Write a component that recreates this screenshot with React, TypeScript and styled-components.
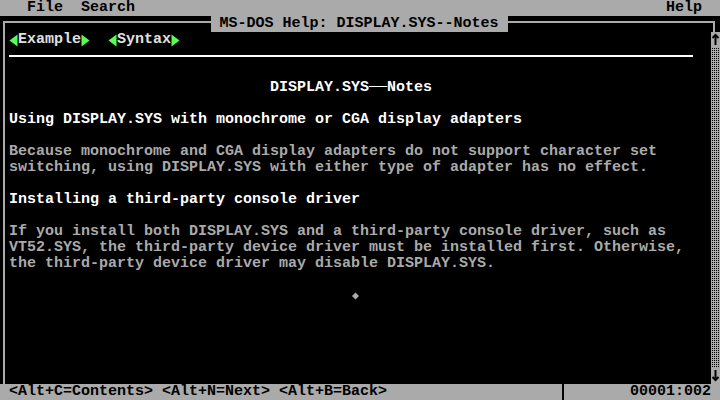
import React from 'react';
import styled, { createGlobalStyle } from 'styled-components';

const CELL = 9;
const ROW = 16;

const GRAY = '#aaaaaa';
const WHITE = '#ffffff';
const GREEN = '#55ff55';

const GlobalStyle = createGlobalStyle`
  html, body {
    margin: 0;
    padding: 0;
    background: #000;
  }
`;

const Screen = styled.div`
  width: 720px;
  height: 400px;
  background: #000;
  display: flex;
  flex-direction: column;
  overflow: hidden;
  font-family: "Liberation Mono", "DejaVu Sans Mono", monospace;
  font-size: 15px;
  font-weight: bold;
  line-height: ${ROW}px;
  white-space: pre;
`;

const MenuBar = styled.div`
  height: ${ROW}px;
  background: ${GRAY};
  color: #000;
  display: flex;
  padding: 0 ${CELL * 2}px 0 ${CELL * 3}px;
  gap: ${CELL * 2}px;
`;

const MenuItem = styled.span<{ $right?: boolean }>`
  margin-left: ${(p) => (p.$right ? 'auto' : '0')};
`;

const TitleRow = styled.div`
  height: ${ROW}px;
  display: flex;
`;

const FrameEdge = styled.div<{ $side: 'left' | 'right' }>`
  flex: 1;
  align-self: flex-end;
  height: 9px;
  border-top: 2px solid ${GRAY};
  ${(p) =>
    p.$side === 'left'
      ? `border-left: 2px solid ${GRAY}; margin-left: 3px;`
      : `border-right: 2px solid ${GRAY}; margin-right: 5px;`}
`;

const Title = styled.div`
  width: ${CELL * 33}px;
  text-align: center;
  background: ${GRAY};
  color: #000;
`;

const Body = styled.div`
  flex: 1;
  display: flex;
`;

const Content = styled.div`
  flex: 1;
  margin-left: 3px;
  border-left: 2px solid ${GRAY};
  padding-left: 4px;
  display: flex;
  flex-direction: column;
`;

const Line = styled.div<{ $tone?: 'bright' | 'normal'; $indent?: number }>`
  height: ${ROW}px;
  color: ${(p) => (p.$tone === 'bright' ? WHITE : GRAY)};
  padding-left: ${(p) => (p.$indent || 0) * CELL}px;
`;

const ButtonRow = styled.div`
  height: ${ROW}px;
  display: flex;
  gap: ${CELL * 2}px;
`;

const Button = styled.span`
  display: inline-flex;
  color: #e0e0e0;
`;

const Separator = styled.div`
  width: ${CELL * 76}px;
  box-sizing: border-box;
  border-bottom: 2px solid ${WHITE};
  height: 9px;
  margin-bottom: 7px;
`;

const Cell = styled.svg`
  display: block;
  width: ${CELL}px;
  height: ${ROW}px;
  flex: none;
`;

const ScrollBar = styled.div`
  width: ${CELL}px;
  display: flex;
  flex-direction: column;
`;

const ScrollArrow = styled.div`
  height: ${ROW}px;
  background: ${GRAY};
`;

const ScrollTrack = styled.div`
  flex: 1;
  background: repeating-conic-gradient(#000 0 25%, ${GRAY} 0 100%) 0 0 / 2px 2px;
`;

const StatusBar = styled.div`
  height: ${ROW}px;
  background: ${GRAY};
  color: #000;
  display: flex;
`;

const StatusKeys = styled.div`
  width: ${CELL * 61}px;
  padding-left: ${CELL}px;
`;

const StatusDivider = styled.div`
  width: ${CELL}px;
  display: flex;
  justify-content: center;
  &::before {
    content: '';
    width: 2px;
    background: #000;
  }
`;

const StatusPos = styled.div`
  flex: 1;
  text-align: right;
  padding-right: ${CELL}px;
`;

const Arrow = ({ dir, color }: { dir: 'left' | 'right' | 'up' | 'down'; color: string }) => {
  const shapes = {
    left: <polygon points="0.5,8.5 8.5,2.5 8.5,14.5" fill={color} />,
    right: <polygon points="8.5,8.5 0.5,2.5 0.5,14.5" fill={color} />,
    up: (
      <g stroke={color} strokeWidth="2" fill="none">
        <line x1="4.5" y1="3" x2="4.5" y2="13" />
        <polyline points="1.5,6 4.5,3 7.5,6" />
      </g>
    ),
    down: (
      <g stroke={color} strokeWidth="2" fill="none">
        <line x1="4.5" y1="2" x2="4.5" y2="12" />
        <polyline points="1.5,9 4.5,12 7.5,9" />
      </g>
    ),
  };
  return <Cell viewBox="0 0 9 16">{shapes[dir]}</Cell>;
};

const Diamond = () => (
  <Cell viewBox="0 0 9 16">
    <polygon points="4.5,4.5 8,8 4.5,11.5 1,8" fill={GRAY} />
  </Cell>
);

const HelpButton = ({ label }: { label: string }) => (
  <Button>
    <Arrow dir="left" color={GREEN} />
    {label}
    <Arrow dir="right" color={GREEN} />
  </Button>
);

export default function App() {
  return (
    <Screen>
      <GlobalStyle />
      <MenuBar>
        <MenuItem>File</MenuItem>
        <MenuItem>Search</MenuItem>
        <MenuItem $right>Help</MenuItem>
      </MenuBar>

      <TitleRow>
        <FrameEdge $side="left" />
        <Title>MS-DOS Help: DISPLAY.SYS--Notes</Title>
        <FrameEdge $side="right" />
      </TitleRow>

      <Body>
        <Content>
          <ButtonRow>
            <HelpButton label="Example" />
            <HelpButton label="Syntax" />
          </ButtonRow>
          <Separator />
          <Line />
          <Line $tone="bright" $indent={29}>DISPLAY.SYS──Notes</Line>
          <Line />
          <Line $tone="bright">Using DISPLAY.SYS with monochrome or CGA display adapters</Line>
          <Line />
          <Line>Because monochrome and CGA display adapters do not support character set</Line>
          <Line>switching, using DISPLAY.SYS with either type of adapter has no effect.</Line>
          <Line />
          <Line $tone="bright">Installing a third-party console driver</Line>
          <Line />
          <Line>If you install both DISPLAY.SYS and a third-party console driver, such as</Line>
          <Line>VT52.SYS, the third-party device driver must be installed first. Otherwise,</Line>
          <Line>the third-party device driver may disable DISPLAY.SYS.</Line>
          <Line />
          <Line $indent={38}>
            <Diamond />
          </Line>
        </Content>
        <ScrollBar>
          <ScrollArrow>
            <Arrow dir="up" color="#000" />
          </ScrollArrow>
          <ScrollTrack />
          <ScrollArrow>
            <Arrow dir="down" color="#000" />
          </ScrollArrow>
        </ScrollBar>
      </Body>

      <StatusBar>
        <StatusKeys>{'<Alt+C=Contents> <Alt+N=Next> <Alt+B=Back>'}</StatusKeys>
        <StatusDivider />
        <StatusPos>00001:002</StatusPos>
      </StatusBar>
    </Screen>
  );
}
